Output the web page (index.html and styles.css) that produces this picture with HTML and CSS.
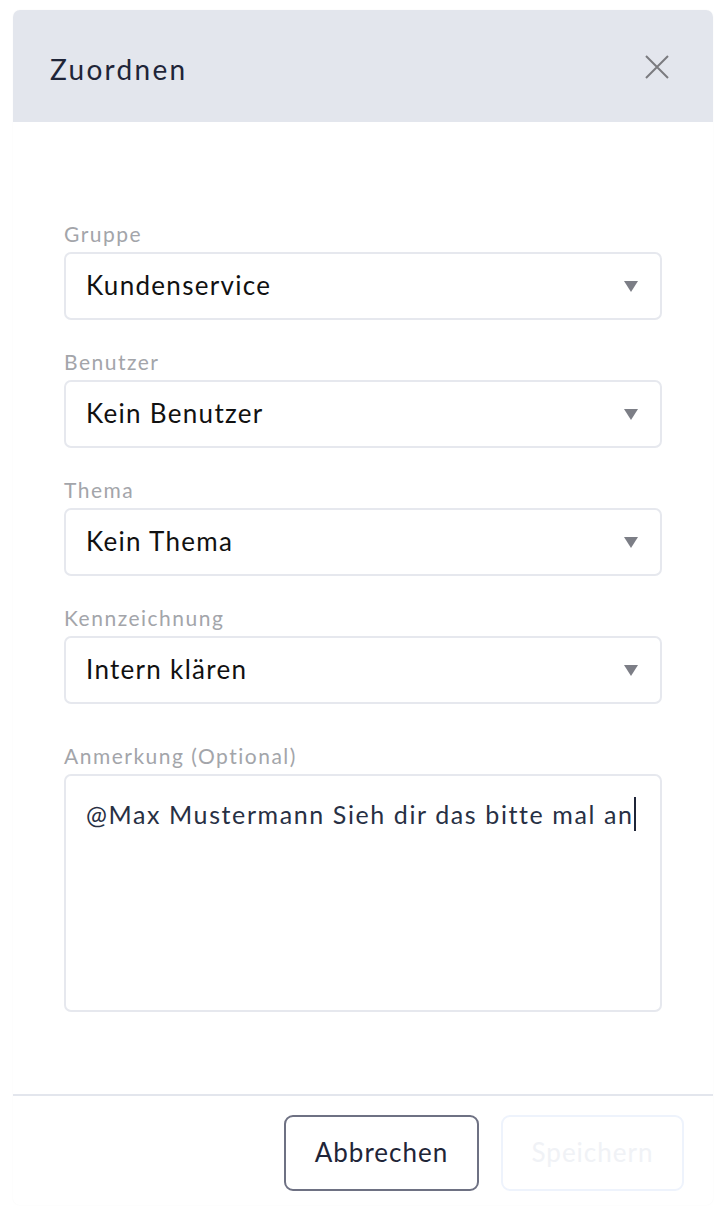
FILE: index.html
```html
<!DOCTYPE html>
<html lang="de">
<head>
<meta charset="utf-8">
<title>Zuordnen</title>
<link rel="stylesheet" href="styles.css">
</head>
<body>
<div class="modal">
  <div class="modal-header">
    <h1 class="modal-title">Zuordnen</h1>
    <button class="close-btn" aria-label="Schließen">
      <svg width="24" height="24" viewBox="0 0 24 24"><path d="M1 1L23 23M23 1L1 23" stroke="#7b7b7f" stroke-width="2" fill="none"/></svg>
    </button>
  </div>
  <div class="modal-body">
    <div class="field">
      <label class="field-label">Gruppe</label>
      <div class="select"><span>Kundenservice</span><span class="caret"></span></div>
    </div>
    <div class="field">
      <label class="field-label">Benutzer</label>
      <div class="select"><span>Kein Benutzer</span><span class="caret"></span></div>
    </div>
    <div class="field">
      <label class="field-label">Thema</label>
      <div class="select"><span>Kein Thema</span><span class="caret"></span></div>
    </div>
    <div class="field">
      <label class="field-label">Kennzeichnung</label>
      <div class="select"><span>Intern klären</span><span class="caret"></span></div>
    </div>
    <div class="field field-note">
      <label class="field-label">Anmerkung (Optional)</label>
      <div class="textarea"><span>@Max Mustermann Sieh dir das bitte mal an</span><span class="cursor"></span></div>
    </div>
  </div>
  <div class="modal-footer">
    <button class="btn btn-secondary">Abbrechen</button>
    <button class="btn btn-disabled">Speichern</button>
  </div>
</div>
</body>
</html>
```
FILE: styles.css
```css
* { box-sizing: border-box; }
html, body { margin: 0; padding: 0; background: #fff; }
body {
  font-family: "Lato", "Noto Sans", sans-serif;
  padding: 10px 11px 10px 13px;
}
.modal {
  width: 700px;
  background: #fff;
  border-radius: 7px;
  box-shadow: 0 0 2px rgba(0,0,0,0.04);
}
.modal-header {
  height: 112px;
  background: #e3e6ed;
  border-radius: 7px 7px 0 0;
  display: flex;
  align-items: center;
  justify-content: space-between;
  padding: 0 44px 0 37px;
}
.modal-title {
  margin: 0;
  font-size: 28px;
  font-weight: 400;
  letter-spacing: 2.3px;
  color: #1f2538;
  padding-top: 5px;
}
.close-btn {
  background: none;
  border: 0;
  padding: 0;
  width: 24px;
  height: 24px;
  display: flex;
  margin-top: 2px;
}
.modal-body {
  padding: 98px 51px 82px;
  display: flex;
  flex-direction: column;
  gap: 28px;
}
.field { display: flex; flex-direction: column; gap: 4px; }
.field-note { margin-top: 10px; }
.field-label {
  font-size: 21px;
  line-height: 28px;
  letter-spacing: 1.5px;
  color: #a3a5aa;
}
.select {
  height: 68px;
  border: 2px solid #e6e8ee;
  border-radius: 7px;
  display: flex;
  align-items: center;
  justify-content: space-between;
  padding: 0 22px 3px 20px;
  font-size: 26px;
  letter-spacing: 1.3px;
  color: #111;
}
.caret {
  width: 0;
  height: 0;
  border-left: 7px solid transparent;
  border-right: 7px solid transparent;
  border-top: 11px solid #7c7e86;
  margin-top: 4px;
}
.textarea {
  height: 238px;
  border: 2px solid #e6e8ee;
  border-radius: 7px;
  padding: 21px 20px;
  font-size: 25px;
  line-height: 34px;
  letter-spacing: 1.6px;
  color: #283044;
  display: flex;
  align-items: flex-start;
}
.cursor {
  display: inline-block;
  width: 2px;
  height: 34px;
  background: #1f2538;
  margin-left: 0;
}
.modal-footer {
  border-top: 2px solid #e3e6ed;
  display: flex;
  justify-content: flex-end;
  gap: 22px;
  padding: 19px 29px 14px;
}
.btn {
  height: 76px;
  border-radius: 9px;
  font-family: inherit;
  font-size: 26px;
  letter-spacing: 1px;
  background: #fff;
  padding: 0 0 2px;
}
.btn-secondary {
  width: 195px;
  border: 2px solid #6e7183;
  color: #1f2538;
}
.btn-disabled {
  width: 183px;
  border: 2px solid #eef3fc;
  color: #f0f2f6;
}
```
